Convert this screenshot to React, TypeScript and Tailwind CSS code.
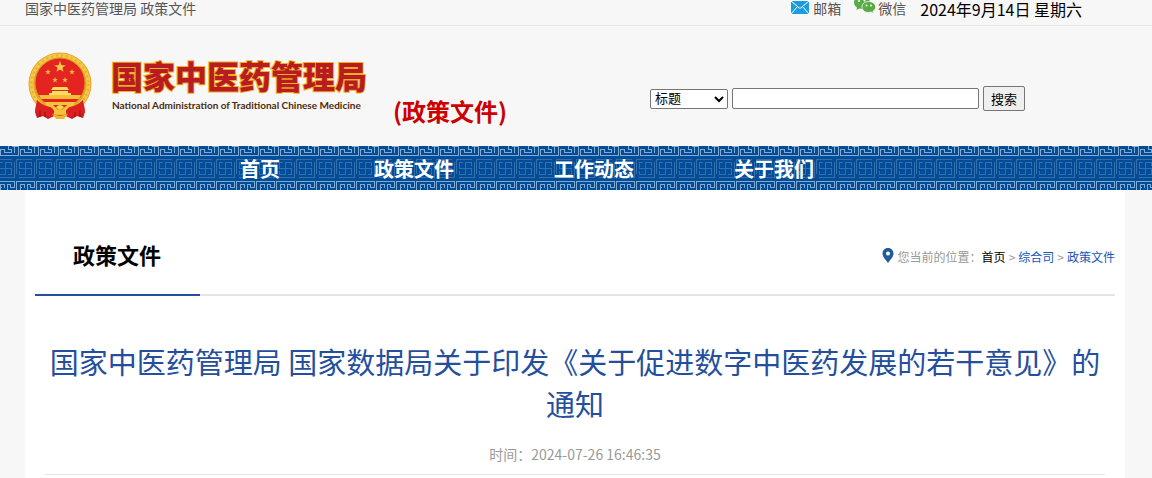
import React, { useState } from 'react';

const star = 'M0 -1 L.25 -.31 L.95 -.31 L.4 .12 L.59 .81 L0 .4 L-.59 .81 L-.4 .12 L-.95 -.31 L-.25 -.31 Z';

const smallStars = [
  [20, 20],
  [27, 28],
  [37, 28],
  [44, 20],
];

const Emblem: React.FC = () => (
  <svg viewBox="0 0 64 68" className="h-[68px] w-16 shrink-0" aria-hidden="true">
    <path d="M9 46 L7 60 L9 66 L15 64 L20 67 L26 64 L38 64 L44 67 L49 64 L55 66 L57 60 L55 46 Z" fill="#c91a1c" />
    <circle cx="32" cy="32" r="31.500" fill="#e5a626" />
    <circle cx="32" cy="32" r="28.500" fill="none" stroke="#f4c84a" strokeWidth="4" />
    <circle cx="32" cy="32" r="28.500" fill="none" stroke="#e8ae2e" strokeWidth="2" strokeDasharray="2 3" />
    <circle cx="32" cy="31" r="25" fill="#e42420" stroke="#d9961b" />
    <path d={star} transform="translate(32 15) scale(6)" fill="#f8c94a" />
    {smallStars.map(([x, y], i) => (
      <path key={i} d={star} transform={`translate(${x} ${y}) scale(3)`} fill="#f3b83d" />
    ))}
    <path d="M25 35 H39 L41 38 H23 Z M24 39 H40 V41 H43 V44 H21 V41 H24 Z" fill="#fbdc62" />
    <path d="M11 43 H53 L51 47 H13 Z" fill="#f6bf35" />
    <path d="M16 50 H48 L45 53 H19 Z" fill="#f6c33c" />
    <path d="M9 48 Q17 56 27 55 L25 65 Q15 65 7 60 Z M55 48 Q47 56 37 55 L39 65 Q49 65 57 60 Z" fill="#dc2020" />
    <path d="M18 52 Q25 53 28 59 Q32 62 36 59 Q39 53 46 52" fill="none" stroke="#f5c53e" strokeWidth="3" />
    <path d="M28 55 Q32 51 36 55 L32 58 Z" fill="#f8d254" />
    <path d="M24 62 L28 67 H36 L40 62 L32 64 Z" fill="#f1b52f" />
    <path d="M12 58 V65 M17 60 V65 M47 60 V65 M52 58 V65" stroke="#9d1014" />
  </svg>
);

const FretPattern: React.FC = () => (
  <svg className="absolute inset-0 h-full w-full" aria-hidden="true" shapeRendering="crispEdges">
    <defs>
      <pattern id="fret-top" width="20" height="44" patternUnits="userSpaceOnUse">
        <path
          d="M.5 9.500 V3.500 H4 M4.500 3 V6.500 H11.500 V3.500 H8.500 V0 M0 9.500 H19 M18.500 9.500 V1 M12 .500 H19 M14.500 0 V7"
          fill="none"
          stroke="#82abd2"
        />
      </pattern>
      <pattern id="fret-lower" x="16" width="20" height="44" patternUnits="userSpaceOnUse">
        <path
          d="M.5 44 V35.500 H18.500 V41.500 H14.500 V38.500 H11.500 V44 M4.500 44 V38.500 H8.500 V42 M4 41.500 H6"
          fill="none"
          stroke="#82abd2"
        />
        <path
          d="M.5 28 V13.500 H16 M18.500 16 V31.500 H3 M9.500 16 V29 M3 22.500 H16 M9.500 16.500 H15.500 V20 M9.500 28.500 H3.500 V25 M3.500 22.500 V16.500 H7 M15.500 22.500 V28.500 H12"
          fill="none"
          stroke="#3370ab"
        />
      </pattern>
    </defs>
    <rect width="100%" height="100%" fill="url(#fret-top)" />
    <rect width="100%" height="100%" fill="url(#fret-lower)" />
  </svg>
);

const WeChat: React.FC = () => (
  <svg viewBox="0 0 22 18" className="h-[18px] w-[22px]" aria-hidden="true">
    <path d="M8 0 C3 0 0 3 0 6.500 C0 9 1.500 10.500 3 11.500 L2.500 14 L5.500 12.500 L8 13 C13 13 16 10 16 6.500 S12 0 8 0 Z" fill="#5aab46" />
    <path d="M14.500 5.500 C10.500 5.500 8 8 8 11 S10.500 16.500 14.500 16.500 L17 16 L19.500 17.500 L19 15 C21 14 21.800 12.500 21.800 11 C21.800 8 18.500 5.500 14.500 5.500 Z" fill="#5aab46" stroke="#f7f7f7" strokeWidth=".8" />
    <g fill="#fff">
      <circle cx="5" cy="5" r="1" />
      <circle cx="10.500" cy="4.500" r="1" />
      <circle cx="12.500" cy="9.500" r="1" />
      <circle cx="17" cy="9.500" r="1" />
    </g>
  </svg>
);

const App: React.FC = () => {
  const [keyword, setKeyword] = useState('');

  const navItems = ['政策文件', '工作动态', '关于我们'];

  return (
    <div className="flex min-h-screen flex-col bg-[#f7f7f7] font-['Noto_Sans_CJK_SC',sans-serif] text-black">
      {/* Top bar */}
      <div className="flex h-[26px] items-start justify-between border-b border-[#e5e5e5] pr-[70px] pl-[25px] text-sm leading-4 text-[#555]">
        <span>国家中医药管理局 政策文件</span>
        <div className="flex items-start">
          <a href="#mail" className="mr-[13px] flex items-start gap-1">
            <svg viewBox="0 0 18 13" className="mt-px h-[13px] w-[18px]" aria-hidden="true">
              <path d="M0 0 H18 V13 H0 Z" fill="#1c9ce0" />
              <path d="M0 0 L9 7.500 L18 0 M0 13 L6.500 5.500 M18 13 L11.500 5.500" fill="none" stroke="#fff" />
            </svg>
            邮箱
          </a>
          <a href="#wechat" className="mr-3.5 flex items-start gap-0.5">
            <span className="-mt-1">
              <WeChat />
            </span>
            微信
          </a>
          <span className="text-base leading-[18px] text-black">2024年9月14日 星期六</span>
        </div>
      </div>

      {/* Header */}
      <header className="flex h-[120px] items-start pr-[127px] pl-7">
        <div className="flex pt-[26px]">
          <Emblem />
          <div className="ml-[19px] w-[258px]">
            <div className="pt-[3px] text-[32px] leading-10 font-black whitespace-nowrap text-[#b71c22] [-webkit-text-stroke:2px_#f4b01e] [paint-order:stroke_fill]">
              国家中医药管理局
            </div>
            <div className="pt-0.5 pl-px font-['Lato',sans-serif] text-[10px] leading-4 font-bold whitespace-nowrap text-[#4d2b0c]">
              National Administration of Traditional Chinese Medicine
            </div>
          </div>
        </div>
        <h1 className="ml-6 pt-[67px] text-2xl leading-9 font-bold whitespace-nowrap text-[#c00]">(政策文件)</h1>
        <form
          className="mt-[60px] ml-auto flex items-center gap-1 text-[13px]"
          onSubmit={(e) => e.preventDefault()}
        >
          <select
            aria-label="搜索范围"
            className="h-5 w-[78px] rounded-xs border border-[#767676] bg-white font-['Liberation_Sans','Noto_Sans_CJK_SC',sans-serif]"
          >
            <option>标题</option>
            <option>正文</option>
          </select>
          <input
            type="text"
            aria-label="关键词"
            value={keyword}
            onChange={(e) => setKeyword(e.target.value)}
            className="h-[21px] w-[247px] rounded-xs border border-[#767676] bg-white px-1"
          />
          <button type="submit" className="h-[25px] w-[42px] rounded-xs border border-[#767676] bg-[#efefef] leading-5">
            搜索
          </button>
        </form>
      </header>

      {/* Navigation */}
      <nav className="relative h-11 bg-[#034c97]">
        <FretPattern />
        <div className="relative flex h-full items-center pt-0.5 pl-60 text-xl font-bold text-white">
          <a href="#home" className="mr-[94px]">
            首页
          </a>
          <div className="flex gap-[100px]">
            {navItems.map((item) => (
              <a key={item} href={`#${item}`}>
                {item}
              </a>
            ))}
          </div>
        </div>
      </nav>

      {/* Content */}
      <main className="mr-[27px] ml-[25px] flex-1 bg-white px-2.5 pt-7">
        <div className="flex items-stretch justify-between border-b-2 border-[#e5e5e5]">
          <h2 className="-mb-0.5 w-[165px] border-b-2 border-[#254f9c] pt-5 pb-6 pl-[38px] text-[22px] leading-8 font-bold">
            政策文件
          </h2>
          <div className="flex items-center pt-0.5 text-xs whitespace-nowrap text-[#999]">
            <svg viewBox="0 0 12 15" className="mr-1 mb-1 h-[15px] w-3" aria-hidden="true">
              <path
                d="M6 0 C2.500 0 .5 2.500 .5 5.500 C.5 9 4 12 6 15 C8 12 11.500 9 11.500 5.500 C11.500 2.500 9.500 0 6 0 Z M6 3.500 A2 2 0 1 1 6 7.500 A2 2 0 1 1 6 3.500 Z"
                fill="#205c98"
                fillRule="evenodd"
              />
            </svg>
            您当前的位置：
            <div className="flex gap-[3px]">
              <a href="#home" className="text-black">首页</a>
              <span>&gt;</span>
              <a href="#office" className="text-[#1456b8]">综合司</a>
              <span>&gt;</span>
              <a href="#policy" className="text-[#1456b8]">政策文件</a>
            </div>
          </div>
        </div>

        <article className="px-2.5 pt-11">
          <h3 className="text-center text-[29px] leading-[42px] text-[#254f9c]">
            国家中医药管理局 国家数据局关于印发《关于促进数字中医药发展的若干意见》的通知
          </h3>
          <p className="border-b border-[#e5e5e5] pt-5 pb-2.5 text-center text-sm text-[#999]">
            时间：2024-07-26 16:46:35
          </p>
        </article>
      </main>
    </div>
  );
};

export default App;
